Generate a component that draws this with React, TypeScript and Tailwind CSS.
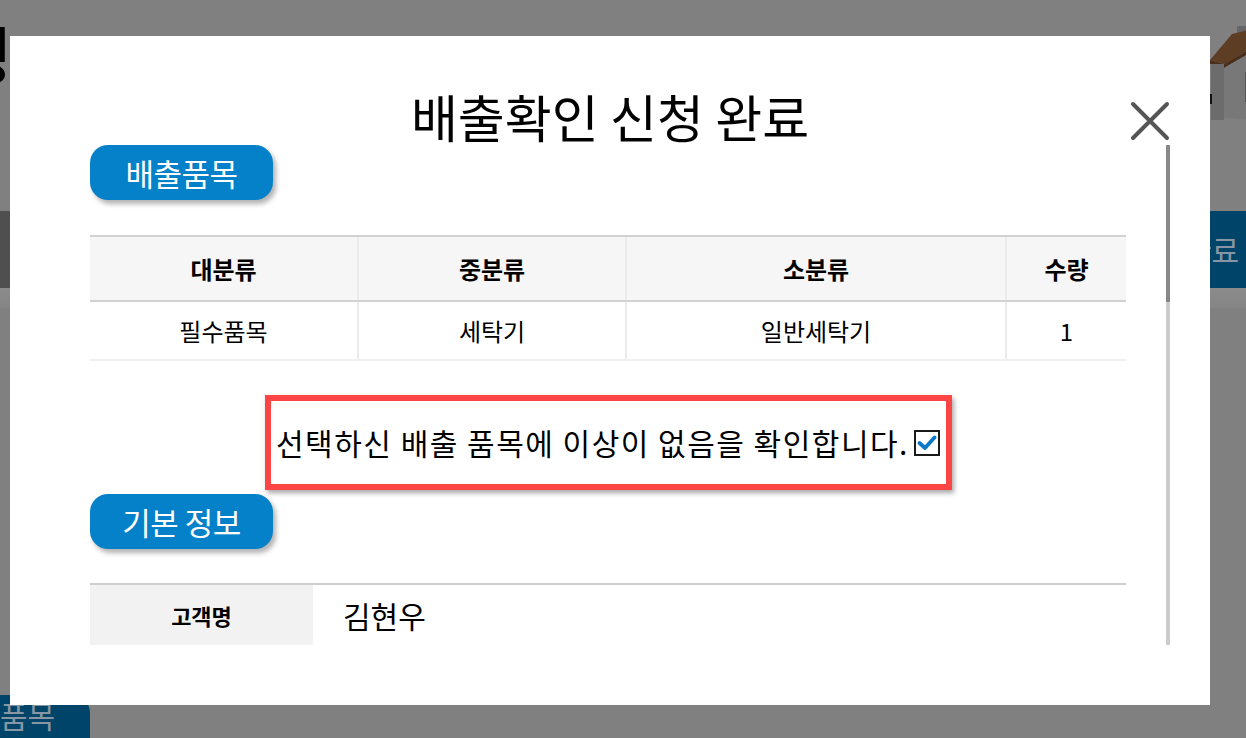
const font = "font-['Noto_Sans_CJK_KR','Noto_Sans',sans-serif]";

const items = [{ major: "필수품목", middle: "세탁기", minor: "일반세탁기", qty: 1 }];

const info = [{ label: "고객명", value: "김현우" }];

function SectionPill({ children }: { children: string }) {
  return (
    <div className="w-[183px] h-[55px] rounded-[18px] bg-[#0481c8] shadow-[3px_4px_5px_rgba(0,0,0,0.3)] flex items-center justify-center text-white text-[31px] leading-none tracking-[-0.5px]">
      {children}
    </div>
  );
}

// house picture peeking out behind the modal
function House() {
  return (
    <svg width="40" height="100" viewBox="0 0 40 100" className="absolute left-[1208px] top-[20px]">
      <rect x="29" y="6" width="9" height="14" fill="#666" />
      <polygon points="2,40 24,14 40,10 40,30 16,44" fill="#5e3d25" />
      <polygon points="2,40 16,44 40,30 40,34 16,48 2,44" fill="#4a2f1d" />
      <polygon points="3,44 16,48 40,34 40,100 3,96" fill="#787878" />
      <rect x="3" y="44" width="13" height="62" fill="#6c6c6c" />
      <rect x="1" y="74" width="3" height="10" fill="#111" />
      <rect x="37" y="52" width="3" height="30" fill="#555" />
    </svg>
  );
}

function Backdrop() {
  return (
    <>
      <div className="absolute left-[-46px] top-[20px] text-[64px] leading-none text-black">성</div>
      <House />
      <div className="absolute left-0 right-0 top-[211px] h-[77px] bg-[#4f4f4f]" />
      <div className="absolute left-0 right-0 top-[288px] h-[20px] bg-gradient-to-b from-[#8b8b8b] to-[#858585]" />
      <div className="absolute left-[1150px] top-[211px] w-[120px] h-[77px] bg-[#00446a] flex items-center pl-[34px] text-[30px] text-[#8796a2]">
        완료
      </div>
      <div className="absolute left-[-40px] top-[695px] w-[130px] h-[60px] rounded-[18px] bg-[#00446a] pl-[40px] text-[30px] leading-[40px] text-[#8796a2]">
        품목
      </div>
    </>
  );
}

export default function App() {
  return (
    <div className={`relative w-[1246px] h-[738px] overflow-hidden bg-[#808080] ${font}`}>
      <Backdrop />

      <div className="absolute left-[10px] top-[36px] w-[1200px] h-[669px] bg-white flex flex-col">
        <h1 className="pt-[51px] text-center text-[51px] leading-[58px] font-normal text-black">
          배출확인 신청 완료
        </h1>

        <button className="absolute left-[1120px] top-[65px] w-[40px] h-[40px]">
          <svg viewBox="0 0 40 40" width="40" height="40">
            <path d="M3 3 L37 37 M37 3 L3 37" stroke="#555" strokeWidth="4" strokeLinecap="round" />
          </svg>
        </button>

        <div className="flex pl-[80px] h-[500px]">
          <div className="w-[1036px] h-[500px] overflow-hidden">
            <SectionPill>배출품목</SectionPill>

            <div className="mt-[35px] text-black">
              <div className="grid grid-cols-[267px_268px_380px_121px] h-[67px] bg-[#f6f6f6] border-t-2 border-b-2 border-[#d2d2d2] text-[24px] font-bold">
                <div className="flex items-center justify-center">대분류</div>
                <div className="flex items-center justify-center border-l-2 border-[#ebebeb]">중분류</div>
                <div className="flex items-center justify-center border-l-2 border-[#ebebeb]">소분류</div>
                <div className="flex items-center justify-center border-l-2 border-[#ebebeb]">수량</div>
              </div>
              {items.map((it, i) => (
                <div
                  key={i}
                  className="grid grid-cols-[267px_268px_380px_121px] h-[59px] border-b-2 border-[#f0f0f0] text-[24px]"
                >
                  <div className="flex items-center justify-center">{it.major}</div>
                  <div className="flex items-center justify-center border-l-2 border-[#ebebeb]">{it.middle}</div>
                  <div className="flex items-center justify-center border-l-2 border-[#ebebeb]">{it.minor}</div>
                  <div className="flex items-center justify-center border-l-2 border-[#ebebeb]">{it.qty}</div>
                </div>
              ))}
            </div>

            <div className="mt-[34px] mx-auto w-[687px] h-[95px] border-[6px] border-[#fd4545] shadow-[2px_3px_5px_rgba(0,0,0,0.35)] flex items-center justify-center gap-[5px] text-[30px] tracking-[1.5px] text-black">
              <span>선택하신 배출 품목에 이상이 없음을 확인합니다.</span>
              <span className="w-[26px] h-[26px] border-2 border-[#1a1a1a] bg-white flex items-center justify-center shrink-0">
                <svg viewBox="0 0 20 20" width="20" height="20">
                  <path d="M2.5 10 L8 15 L17.5 4.5" fill="none" stroke="#0a78c8" strokeWidth="3.8" strokeLinecap="round" strokeLinejoin="round" />
                </svg>
              </span>
            </div>

            <div className="mt-[4px]">
              <SectionPill>기본 정보</SectionPill>
            </div>

            <div className="mt-[34px] border-t-2 border-[#cfcfcf]">
              {info.map((row) => (
                <div key={row.label} className="flex h-[60px] items-center">
                  <div className="w-[223px] h-full bg-[#f2f2f2] flex items-center justify-center text-[22px] font-bold text-black">
                    {row.label}
                  </div>
                  <div className="pl-[30px] text-[30px] text-black">{row.value}</div>
                </div>
              ))}
            </div>
          </div>

          <div className="ml-[40px] w-[4px] h-[500px] flex flex-col">
            <div className="h-[157px] bg-[#888]" />
            <div className="flex-1 bg-[#cbcbcb]" />
          </div>
        </div>
      </div>
    </div>
  );
}
